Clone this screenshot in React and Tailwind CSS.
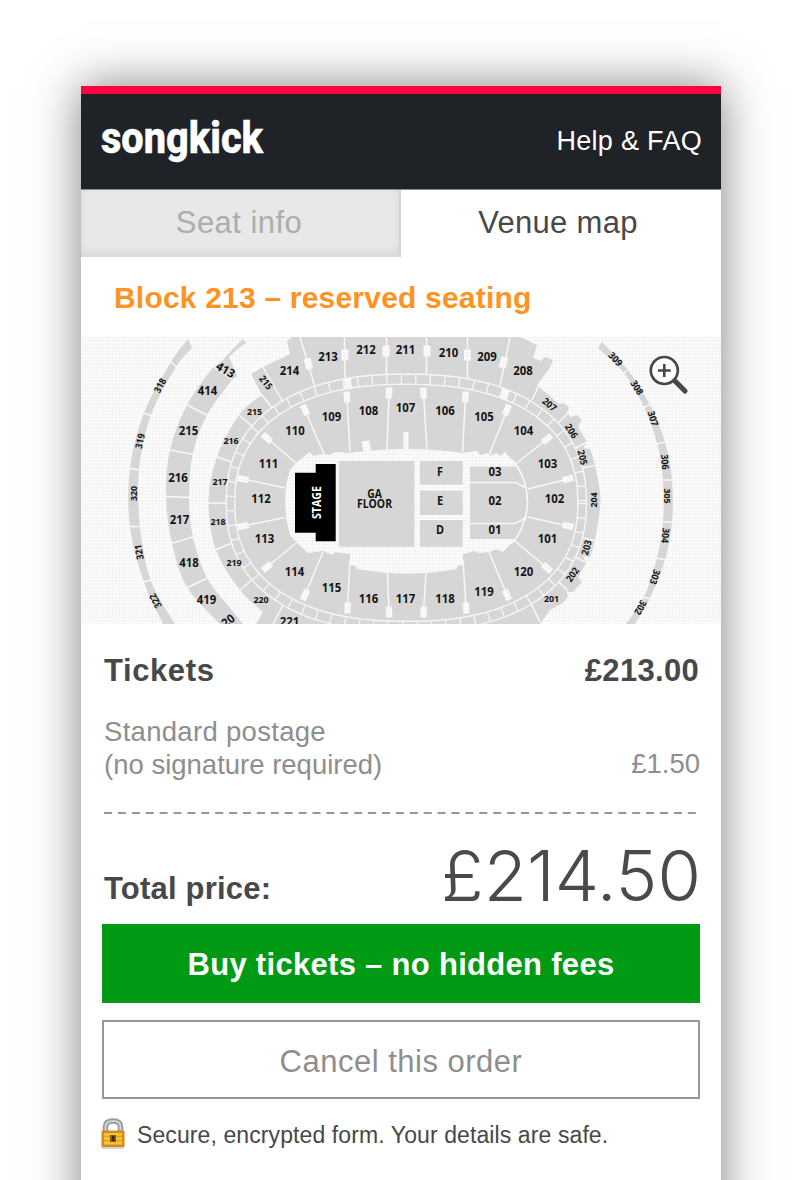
const GRAY = '#d6d6d6';

const smooth = (pts, move = true) => {
  let d = (move ? 'M' : 'L') + pts[0].join(' ');
  for (let i = 0; i < pts.length - 1; i++) {
    const a = pts[i - 1] || pts[i], b = pts[i], c = pts[i + 1], e = pts[i + 2] || c;
    d += `C${b[0] + (c[0] - a[0]) / 6} ${b[1] + (c[1] - a[1]) / 6} ${c[0] - (e[0] - b[0]) / 6} ${c[1] - (e[1] - b[1]) / 6} ${c[0]} ${c[1]}`;
  }
  return d;
};

const oval = (a, b, n = 2.33) => {
  const pts = [];
  for (let i = 0; i < 120; i++) {
    const t = (i / 120) * Math.PI * 2, c = Math.cos(t), s = Math.sin(t);
    pts.push(`${(406.3 + a * Math.sign(c) * Math.abs(c) ** (2 / n)).toFixed(1)} ${(502.8 + b * Math.sign(s) * Math.abs(s) ** (2 / n)).toFixed(1)}`);
  }
  return 'M' + pts.join('L') + 'Z';
};

const band = (outer, inner) => smooth(outer) + smooth([...inner].reverse(), false) + 'Z';

const left300 = band(
  [[188, 339], [171, 362], [144, 413], [130, 468], [130, 527], [144, 582], [163, 624]],
  [[192, 348], [176, 367], [151, 415], [139, 470], [140, 527], [151, 581], [175, 624]],
);
const left400 = band(
  [[213, 367], [187, 405], [170, 450], [166, 497], [172, 543], [187, 587], [220, 624]],
  [[232, 380], [207, 415], [193, 453], [189, 497], [193, 537], [207, 578], [230, 608], [243, 624]],
);
const right300 = band(
  [[602, 342], [628, 370], [650, 405], [665, 442], [672, 480], [672, 522], [665, 560], [650, 598], [635, 624]],
  [[598, 348], [624, 373], [644, 407], [657, 443], [663, 481], [663, 522], [657, 558], [644, 597], [626, 624]],
);

const upperTier =
  'M292 337L287 341L290 354L263 367L251 374L262 395' +
  smooth([[262, 395], [239, 415], [217, 457], [208.5, 502], [216, 550], [240, 590], [263, 612]], false) +
  'L256 624H540L550 610L563 603L568 597L567 592L573 592L582 582L578 577L586 563L583 556L590 557' +
  smooth([[590, 557], [595, 540], [600, 508], [600, 492], [595, 465], [590, 449]], false) +
  'L583 448L587 442L578 427L582 420L577 415L571 417L567 413L569 407L563 403L559 404L537 385L550 368L553 360L545 357L541 361L533 358L537 345L520 337Z';

const bowl =
  'M285 500L286 485L290 470L297 462L310 452L313 456L323 454L330 455L335 452L350 453Q378 449 407 449Q436 449 463 453L477 451L480 455L487 453L490 456L497 453L500 456L505 452L515 463' +
  'Q527 480 528 502Q527 522 515 540L503 552L496 549L490 552L478 553L475 551L463 554V565L457 566V569Q407 578 357 569L356 566L350 565V554L335 552L333 555L323 551L308 553L297 543L290 535L286 518Z';

const upperLines = [
  [300, 337, 315, 387], [344.5, 337, 345, 378], [386.5, 337, 386.5, 374], [426.5, 337, 426.5, 374], [467.5, 337, 467.5, 378], [510, 337, 500, 386],
  [263, 367, 283, 402], [262, 395, 272, 408], [239, 415, 253, 427], [217, 457, 232, 462], [208, 503, 227, 503], [216, 549.5, 232, 543], [240, 590, 253, 579], [273, 624, 284, 603],
  [539, 385, 532, 400], [568, 413, 556, 425], [587, 442, 572, 450], [597, 465, 582, 468], [596, 541, 580, 537], [585, 562, 572, 555], [568, 591, 558, 581], [540, 622, 531, 604],
];

const lowerLines = [
  [267, 438, 296, 463], [243, 479, 285, 488], [243, 526, 285, 517.5], [267, 567, 296, 543], [305, 410, 324, 454], [347, 397, 350, 452],
  [389, 393, 387, 450], [423.5, 393, 427, 450], [465.5, 397, 462.5, 452], [507, 410, 489, 455], [547, 439, 517, 463], [568, 479, 528, 489],
  [568, 526, 528, 517], [547, 568, 515, 541], [507, 595, 489, 552], [466, 608, 463, 560], [423.5, 612, 426, 573], [389, 612, 387.5, 573],
  [347.5, 608, 350, 560], [305, 595, 323, 552],
];

const tierBoxes = [
  [308.5, 364, -14], [345, 355, 0], [386, 351, 0], [427, 351, 0], [467.5, 355, 0], [503.5, 362.5, 15], [348, 383.5, -5], [505, 394.5, 18],
];

const labels = [
  [289.5, 370.5, '214'], [328, 356.5, '213'], [366, 349.5, '212'], [405.5, 349.5, '211'], [448.5, 352.5, '210'], [487, 356.5, '209'], [523, 370.5, '208'],
  [207.5, 391, '414'], [188.5, 431, '215'], [178, 477.5, '216'], [179.5, 519.5, '217'], [189, 562.5, '418'], [206.5, 599.5, '419'],
  [331.5, 417, '109'], [368.5, 410.5, '108'], [405.5, 407.5, '107'], [445, 410.5, '106'], [484, 417, '105'], [523.5, 431, '104'],
  [295, 431, '110'], [268.5, 463.5, '111'], [261, 499, '112'], [264.5, 539, '113'], [294.5, 571.5, '114'], [331.5, 588, '115'], [368.5, 598.5, '116'],
  [405.5, 598.5, '117'], [445, 598.5, '118'], [484, 591.5, '119'], [523.5, 571.5, '120'], [547.5, 539, '101'], [554.5, 499, '102'], [547.5, 463.5, '103'],
  [289.5, 621.5, '221'], [225.5, 370, '413', 30], [228, 620.5, '20', -38],
];

const smallLabels = [
  [160, 385.5, '318', -62], [140, 441, '319', -78], [134, 493.5, '320', -90], [139, 552, '321', -100], [155.5, 601, '322', -118],
  [266, 382.5, '215', 52], [254.5, 411.5, '215', 0], [231, 441, '216', 0], [220, 481.5, '217', 0], [218, 522, '218', 0], [234, 563, '219', 0], [261, 599.5, '220', 0],
  [549.5, 404.5, '207', 40], [571.5, 431, '206', 58], [582.5, 457.5, '205', 75], [593.5, 500, '204', -90], [586.5, 547.5, '203', -75], [572.5, 574.5, '202', -55], [551.5, 599, '201', 0],
  [615.5, 359, '309', 48], [637, 387.5, '308', 58], [653, 418.5, '307', 72], [665, 462, '306', 85], [667.5, 496, '305', 90], [665.5, 535.5, '304', 95], [655, 577, '303', 108], [640.5, 607.5, '302', 118],
];

function Label({ x, y, children, rotate = 0, width, size, fill = '#141414' }) {
  return (
    <text
      transform={`translate(${x} ${y}) rotate(${rotate})`}
      y={size * 0.357}
      textAnchor="middle"
      fontSize={size}
      fontWeight="700"
      fill={fill}
      textLength={width}
      lengthAdjust="spacingAndGlyphs"
      style={{ fontFamily: '"Open Sans", "Noto Sans", sans-serif' }}
    >
      {children}
    </text>
  );
}

function VenueMap() {
  return (
    <svg className="block h-[287px] w-[640px]" viewBox="81 337 640 287">
      <defs>
        <pattern id="grid" x="82" y="337" width="3.333" height="3.333" patternUnits="userSpaceOnUse">
          <rect width="3.333" height="3.333" fill="#fff" />
          <path d="M0 .6H3.333M.6 0V3.333" stroke="#f3f3f3" strokeWidth="1.1" />
        </pattern>
      </defs>
      <rect x="82" y="337" width="639" height="286.500" fill="url(#grid)" />

      <g fill={GRAY}>
        <path d={left300} />
        <path d={left400} />
        <path d="M213 368L224 359Q233 348 243 339L246 343Q238 348 229 357L237 376L231 381Z" />
        <path d={right300} />
        <path d={upperTier} />
      </g>

      <g stroke="#f8f8f8" strokeWidth="1.5" fill="none">
        {upperLines.map(([a, b, c, d], i) => <path key={i} d={`M${a} ${b}L${c} ${d}`} />)}
        <path d="M170 361L177 368M143 413L152 416M129 468L140 470M129 526.5H141M143 582L152 580" />
        <path d="M212 366L232 379.5M186 404.5L208 415.5M170 450L194 454.5M165 496.5L190 497.5M171 543.5L194 536.5M186 588L208 578" />
        <path d="M629 369L623 374M651 404L643 408M666 442L656 444M673 480H662M673 522H662M666 560L656 558M651 599L643 597" />
      </g>

      <path d={oval(180, 128.7)} fill={GRAY} stroke="#f6f6f6" strokeWidth="1.4" />
      <path d={oval(175.8, 123.7)} fill="none" stroke="#f6f6f6" strokeWidth="9" strokeDasharray="1.3 13.2" />
      <path d={oval(171.5, 118.5)} fill={GRAY} stroke="#f6f6f6" strokeWidth="1.4" />

      <path d={bowl} fill="url(#grid)" />
      <g stroke="#f8f8f8" strokeWidth="1.5">
        {lowerLines.map(([a, b, c, d], i) => <path key={i} d={`M${a} ${b}L${c} ${d}`} />)}
      </g>
      <g fill="url(#grid)">
        {lowerLines.map(([a, b, c, d], i) => (
          <rect key={i} x="-3.2" y="-5.5" width="6.4" height="11" transform={`translate(${a} ${b}) rotate(${(Math.atan2(d - b, c - a) * 180) / Math.PI - 90})`} />
        ))}
        {tierBoxes.map(([x, y, r], i) => <rect key={i} x="-3.5" y="-5.5" width="7" height="11" transform={`translate(${x} ${y}) rotate(${r})`} />)}
        <path d="M361.500 441.500L369.500 440.500L371.500 452H363.500ZM403.500 432H408.500V451H403.500Z" />
      </g>

      <g fill={GRAY}>
        <path d="M339 461H414.300V546.700H339ZM420 461H462.700V484.700H420ZM420 490.700H462.700V515H420ZM420 520H462.700V546.700H420Z" />
        <path d="M470 466.500H516Q526.500 481 527 502Q526.500 522 515 539H470Z" />
      </g>
      <path d="M470 482.500H515.500L527 488.500M470 523.500H515.500L527 517" fill="none" stroke="#f8f8f8" strokeWidth="1.500" />
      <path d="M513 460Q527 478 527.500 502Q527 524 513 543" fill="none" stroke="#f8f8f8" strokeWidth="1.500" />
      <path d="M295 472.700H315.700V464H335.700V541.300H315.700V532.700H295Z" fill="#000" />

      {labels.map(([x, y, t, r], i) => <Label key={i} x={x} y={y} rotate={r} size={12} width={t.length * 6.5}>{t}</Label>)}
      {smallLabels.map(([x, y, t, r], i) => <Label key={i} x={x} y={y} rotate={r} size={9.6} width={15.2}>{t}</Label>)}
      <Label x={317} y={502.500} rotate={-90} size={12} width={33} fill="#fff">STAGE</Label>
      <Label x={374.500} y={494} size={11.500} width={14.500}>GA</Label>
      <Label x={374.500} y={504} size={11.500} width={35}>FLOOR</Label>
      <Label x={440} y={471.500} size={11.500} width={5.900}>F</Label>
      <Label x={440} y={500.500} size={11.500} width={6.200}>E</Label>
      <Label x={440} y={529.500} size={11.500} width={8}>D</Label>
      <Label x={495} y={471.500} size={11.500} width={13}>03</Label>
      <Label x={495} y={500.500} size={11.500} width={13}>02</Label>
      <Label x={495} y={529.500} size={11.500} width={13}>01</Label>

      <g fill="none" stroke="#484848">
        <path d="M674 380L685 391" strokeWidth="5.200" strokeLinecap="round" />
        <circle cx="664.300" cy="370.500" r="13.500" strokeWidth="2.700" fill="#fff" />
        <path d="M658 370.500H670.800M664.300 364V377" strokeWidth="2.600" />
      </g>
    </svg>
  );
}

function Lock() {
  return (
    <svg className="h-8 w-6 shrink-0" viewBox="0 0 24 32">
      <path d="M4.500 14V9Q4.500 3 12 3T19.500 9V14" fill="none" stroke="#96999e" strokeWidth="5.500" />
      <path d="M4.500 13V9Q4.500 3 12 3T19.500 9V13" fill="none" stroke="#cfd2d6" strokeWidth="2" />
      <rect x="1" y="29" width="22" height="2" fill="#d5d5dc" />
      <rect x=".5" y="12.500" width="23" height="16.500" rx="1" fill="#d98a16" />
      <rect x="3" y="15" width="18" height="11.500" fill="#f5c33c" />
      <path d="M3 18.500H21M3 22.500H21" stroke="#e0a02c" strokeWidth="1.500" />
      <rect x="9" y="17" width="6" height="7" fill="#8a5c0c" />
      <rect x="11" y="18" width="2.500" height="5" fill="#3d2b08" />
    </svg>
  );
}

export default function App() {
  return (
    <div className="h-[1180px] w-[800px] overflow-hidden bg-white pt-[86px] pl-[81px] font-['Liberation_Sans',Arial,sans-serif] text-[#484848]">
      <main className="flex h-[1200px] w-[640px] flex-col bg-white shadow-[0_0_45px_rgba(0,0,0,0.5)]">
        <header className="flex h-[103px] items-center justify-between border-t-8 border-[#ff0040] bg-[#1f2227] pr-[19px] pl-5 text-white">
          <svg className="h-[70px] w-[170px] overflow-visible" viewBox="0 0 170 70" role="img">
            <text x="0" y="46" fontSize="45" fontWeight="800" fill="#fff" stroke="#fff" strokeWidth=".5" textLength="162" lengthAdjust="spacingAndGlyphs" style={{ fontFamily: 'Roboto, sans-serif' }}>songkick</text>
          </svg>
          <a className="text-[27px] tracking-[0.3px]">Help &amp; FAQ</a>
        </header>
        <nav className="flex h-[68px] border-t border-[#8a8c8f] text-center text-[31px] leading-[65px]">
          <div className="w-80 border-r-2 border-[#d4d4d4] bg-[#e8e8e8] pr-0.5 tracking-[0.45px] text-[#adadad] shadow-[inset_0_-4px_8px_rgba(0,0,0,0.08)]">Seat info</div>
          <div className="w-80 pr-1.5 tracking-[0.3px]">Venue map</div>
        </nav>
        <h1 className="h-20 pl-[33px] text-[30px] leading-[82px] font-bold tracking-[0.2px] text-[#fe9322]">Block 213 – reserved seating</h1>
        <VenueMap />
        <section className="flex flex-col pr-[21px] pl-[23px]">
          <div className="mt-[27px] flex h-10 items-center justify-between text-[31px] font-bold">
            <span className="tracking-[0.6px]">Tickets</span>
            <span className="pr-px tracking-[0.3px]">£213.00</span>
          </div>
          <div className="mt-[24px] flex h-[66px] items-end justify-between text-[27.5px] leading-[33px] text-[#8e8e8e]">
            <span><span className="tracking-[0.3px]">Standard postage</span><br />(no signature required)</span>
            <span className="pb-px">£1.50</span>
          </div>
          <svg className="mt-[31px] h-[2px] w-[592px]" viewBox="0 0 592 2"><path d="M0 1H592" stroke="#979797" strokeWidth="2" strokeDasharray="8 5.900" /></svg>
          <div className="mt-[8px] flex h-[90px] items-end justify-between">
            <span className="pb-1 text-[31px] leading-[38px] font-bold tracking-[0.2px]">Total price:</span>
            <svg className="h-[80px] w-[257px] overflow-visible" viewBox="0 0 257 80"><text x="-2" y="69" fontSize="70" fontWeight="300" fill="#4a4a48" textLength="260" lengthAdjust="spacingAndGlyphs" style={{ fontFamily: 'Inter, sans-serif' }}>£214.50</text></svg>
          </div>
        </section>
        <div className="mt-3 flex flex-col pr-[21px] pl-[21px]">
          <button className="h-[79px] bg-[#009a15] pt-1 text-[31px] font-bold tracking-[0.3px] text-white">Buy tickets – no hidden fees</button>
          <button className="mt-[17px] h-[79px] border-2 border-[#979797] pt-1.5 text-[31px] tracking-[0.5px] text-[#8e8e8e]">Cancel this order</button>
        </div>
        <footer className="mt-[18px] flex h-[34px] items-center gap-3 pl-5 text-[23px]">
          <Lock />
          <span className="pt-0.5 tracking-[0.1px]">Secure, encrypted form. Your details are safe.</span>
        </footer>
      </main>
    </div>
  );
}
